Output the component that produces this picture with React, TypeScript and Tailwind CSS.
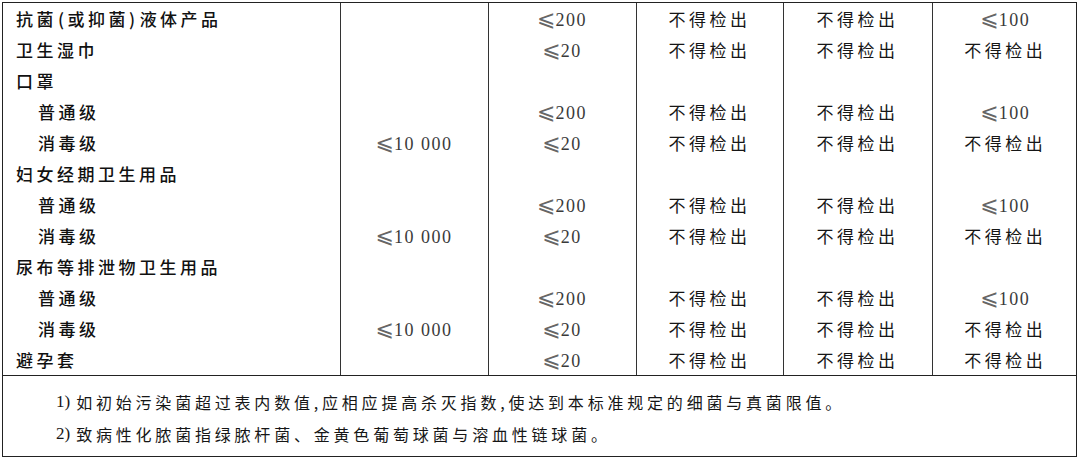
import React from "react";

type Row = {
  name: React.ReactNode
  indent?: boolean
  a?: string
  b?: string
  c?: string
  d?: string
  e?: string
}

const ND = "不得检出"

const rows: Row[] = [
  {
    name: (
      <>
        抗菌<span className="pl-[1px]">(</span>或抑菌<span className="pr-[1px]">)</span>液体产品
      </>
    ),
    b: "200", c: ND, d: ND, e: "100",
  },
  { name: "卫生湿巾", b: "20", c: ND, d: ND, e: ND },
  { name: "口罩" },
  { name: "普通级", indent: true, b: "200", c: ND, d: ND, e: "100" },
  { name: "消毒级", indent: true, a: "10 000", b: "20", c: ND, d: ND, e: ND },
  { name: "妇女经期卫生用品" },
  { name: "普通级", indent: true, b: "200", c: ND, d: ND, e: "100" },
  { name: "消毒级", indent: true, a: "10 000", b: "20", c: ND, d: ND, e: ND },
  { name: "尿布等排泄物卫生用品" },
  { name: "普通级", indent: true, b: "200", c: ND, d: ND, e: "100" },
  { name: "消毒级", indent: true, a: "10 000", b: "20", c: ND, d: ND, e: ND },
  { name: "避孕套", b: "20", c: ND, d: ND, e: ND },
]

const cjk = "font-['Noto_Sans_CJK_SC',sans-serif]"

const Value: React.FC<{ v?: string }> = ({ v }) => {
  if (!v) return null
  if (v === ND) {
    return (
      <span className={`${cjk} text-[17px] tracking-[3.5px] text-[#161616]`}>{v}</span>
    )
  }
  return (
    <span className="inline-flex items-baseline text-[#3a3a3a]">
      <span className="font-['DejaVu_Sans',sans-serif] text-[22px] leading-none text-[#666]">⩽</span>
      <span className="font-['Liberation_Serif',serif] text-[18px] tracking-[1.5px]">{v}</span>
    </span>
  )
}

export default function App() {
  return (
    <div className="w-[1080px] h-[470px] bg-white pt-[2px] pl-[2px]">
      <div className="w-[1075px] border border-[#222]">
        <table className="w-full table-fixed border-collapse">
          <colgroup>
            <col className="w-[337px]" />
            <col className="w-[148px]" />
            <col className="w-[148px]" />
            <col className="w-[147px]" />
            <col className="w-[149px]" />
            <col className="w-[146px]" />
          </colgroup>
          <tbody>
            {rows.map((r, i) => (
              <tr key={i} className="h-[31px]">
                <td className="border-r border-[#333] pl-[13px] leading-none">
                  <span
                    className={`${cjk} text-[17px] tracking-[3.5px] text-[#111] font-medium ${r.indent ? "pl-[22px]" : ""}`}
                  >
                    {r.name}
                  </span>
                </td>
                <td className="border-r border-[#333] text-center leading-none"><Value v={r.a} /></td>
                <td className="border-r border-[#333] text-center leading-none"><Value v={r.b} /></td>
                <td className="border-r border-[#333] text-center leading-none"><Value v={r.c} /></td>
                <td className="border-r border-[#333] text-center leading-none"><Value v={r.d} /></td>
                <td className="text-center leading-none"><Value v={r.e} /></td>
              </tr>
            ))}
          </tbody>
        </table>
        <div className="border-t border-[#222] pt-[10px] pb-[6px] pl-[53px]">
          <div className={`${cjk} h-[32px] flex items-center text-[16px] tracking-[3.8px] text-[#161616]`}>
            <span className="font-['Liberation_Serif',serif] text-[17px] tracking-normal mr-[6px]">1)</span>
            如初始污染菌超过表内数值,应相应提高杀灭指数,使达到本标准规定的细菌与真菌限值。
          </div>
          <div className={`${cjk} h-[32px] flex items-center text-[16px] tracking-[3.8px] text-[#161616]`}>
            <span className="font-['Liberation_Serif',serif] text-[17px] tracking-normal mr-[6px]">2)</span>
            致病性化脓菌指绿脓杆菌、金黄色葡萄球菌与溶血性链球菌。
          </div>
        </div>
      </div>
    </div>
  )
}
